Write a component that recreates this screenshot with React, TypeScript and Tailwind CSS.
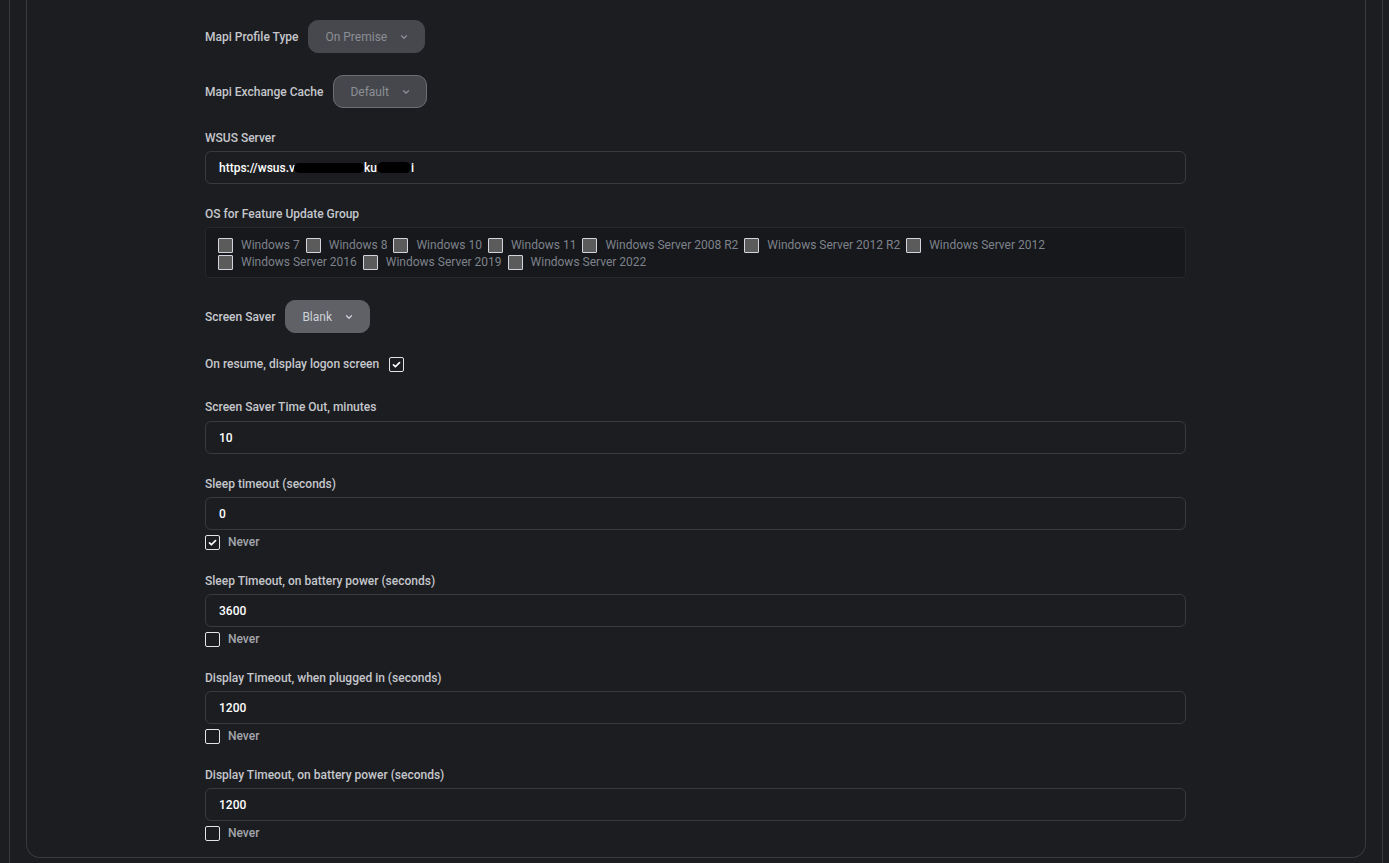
import React from "react";

function Chevron() {
  return (
    <svg width="10" height="10" viewBox="0 0 24 24" fill="none" stroke="currentColor" strokeWidth="3" strokeLinecap="round" strokeLinejoin="round">
      <path d="M6 9l6 6 6-6" />
    </svg>
  );
}

function Check() {
  return (
    <svg width="9" height="9" viewBox="0 0 24 24" fill="none" stroke="white" strokeWidth="4.5" strokeLinecap="round" strokeLinejoin="round">
      <path d="M4 13l5 5L20 7" />
    </svg>
  );
}

function Box({ checked }: { checked?: boolean }) {
  return (
    <span className="w-[15px] h-[15px] shrink-0 border border-[#e4e4e8] rounded-[2px] bg-[#1c1d21] flex items-center justify-center">
      {checked && <Check />}
    </span>
  );
}

function SelectRow({ label, value, variant }: { label: string; value: string; variant: "dim" | "outline" | "light" }) {
  const cls =
    variant === "dim"
      ? "bg-[#46484d] text-[#8c8f95] border-[#46484d]"
      : variant === "outline"
      ? "bg-[#45474c] text-[#8c8f95] border-[#6c6e73]"
      : "bg-[#5f6166] text-[#cfd2d8] border-[#5f6166]";
  return (
    <div className="flex items-center">
      <span className="text-[12px] font-medium text-[#c5c7cc] mr-[10px]">{label}</span>
      <div className={"h-[33px] border rounded-[10px] flex items-center pl-4 pr-[15px] gap-[12px] text-[12px] " + cls}>
        <span>{value}</span>
        <Chevron />
      </div>
    </div>
  );
}

function Input({ value }: { value: string }) {
  return (
    <div className="h-[33px] border border-[#393a3f] rounded-[6px] flex items-center pl-[13px] text-[12px] font-medium text-white">
      {value}
    </div>
  );
}

function Label({ children, gap = "mb-[5px]" }: { children: React.ReactNode; gap?: string }) {
  return <div className={"text-[12px] leading-4 font-medium text-[#c5c7cc] " + gap}>{children}</div>;
}

function NumberField({ label, value, never }: { label: string; value: string; never: boolean }) {
  return (
    <div className="mb-[23px]">
      <Label>{label}</Label>
      <Input value={value} />
      <div className="flex items-center gap-2 mt-[5px] h-[15px] leading-[15px]">
        <Box checked={never} />
        <span className="text-[12px] font-medium text-[#a3a6ac]">Never</span>
      </div>
    </div>
  );
}

const osList = [
  "Windows 7",
  "Windows 8",
  "Windows 10",
  "Windows 11",
  "Windows Server 2008 R2",
  "Windows Server 2012 R2",
  "Windows Server 2012",
  "Windows Server 2016",
  "Windows Server 2019",
  "Windows Server 2022",
];

export default function App() {
  return (
    <div className="h-[863px] overflow-hidden bg-[#1c1d21]" style={{ fontFamily: "Roboto, 'Liberation Sans', sans-serif" }}>
      <div className="ml-[9px] mr-[6px] h-full border-x border-[#393a3f] px-4">
        <div className="h-[858px] border-x border-b border-[#393a3f] rounded-b-[14px]">
          <div className="ml-[178px] w-[981px] pt-5">
            <SelectRow label="Mapi Profile Type" value="On Premise" variant="dim" />
            <div className="mt-[22px]">
              <SelectRow label="Mapi Exchange Cache" value="Default" variant="outline" />
            </div>

            <div className="mt-[22px]">
              <Label>WSUS Server</Label>
              <div className="h-[33px] border border-[#393a3f] rounded-[6px] flex items-center pl-[13px] text-[12px] font-medium text-white">
                <span>https://wsus.v</span>
                <span className="inline-block w-[70px] h-[10px] bg-black rounded-full -ml-px" />
                <span>ku</span>
                <span className="inline-block w-[34px] h-[11px] bg-black rounded-full" />
                <span>i</span>
              </div>
            </div>

            <div className="mt-[22px]">
              <Label>OS for Feature Update Group</Label>
              <div className="h-[51px] border border-[#27282c] bg-[#17181b] rounded-[4px] pl-3 pt-[9px]">
                <div className="flex flex-wrap w-[850px] gap-y-[1px]">
                  {osList.map((os) => (
                    <label key={os} className="flex items-center mr-[6px] h-4">
                      <span className="w-[15px] h-[15px] border border-[#d4d4de] bg-[#5b5b5c] rounded-[1px] mr-2" />
                      <span className="text-[12px] text-[#7d828b]">{os}</span>
                    </label>
                  ))}
                </div>
              </div>
            </div>

            <div className="mt-[22px]">
              <SelectRow label="Screen Saver" value="Blank" variant="light" />
            </div>

            <div className="mt-[22px] flex items-center gap-[10px]">
              <span className="text-[12px] font-medium text-[#c5c7cc]">On resume, display logon screen</span>
              <Box checked />
            </div>

            <div className="mt-[26px] mb-[22px]">
              <Label gap="mb-[6px]">Screen Saver Time Out, minutes</Label>
              <Input value="10" />
            </div>

            <NumberField label="Sleep timeout (seconds)" value="0" never />
            <NumberField label="Sleep Timeout, on battery power (seconds)" value="3600" never={false} />
            <NumberField label="Display Timeout, when plugged in (seconds)" value="1200" never={false} />
            <NumberField label="Display Timeout, on battery power (seconds)" value="1200" never={false} />
          </div>
        </div>
      </div>
    </div>
  );
}
